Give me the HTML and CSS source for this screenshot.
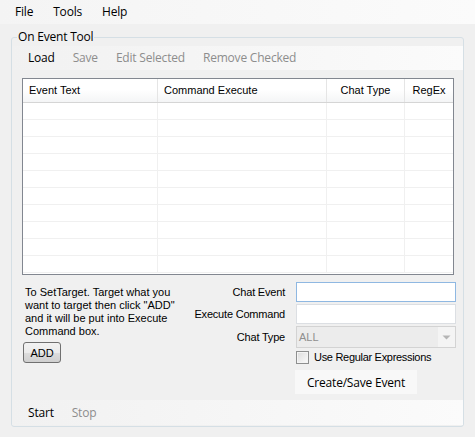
FILE: index.html
```html
<!DOCTYPE html>
<html>
<head>
<meta charset="utf-8">
<link rel="stylesheet" href="styles.css">
</head>
<body>
<div class="menubar">
  <span class="menu-item">File</span>
  <span class="menu-item">Tools</span>
  <span class="menu-item">Help</span>
</div>
<fieldset class="group">
  <legend class="group-title">On Event Tool</legend>
  <div class="toolstrip">
    <span class="tool-item">Load</span>
    <span class="tool-item disabled">Save</span>
    <span class="tool-item disabled">Edit Selected</span>
    <span class="tool-item disabled">Remove Checked</span>
  </div>
  <div class="listview">
    <div class="lv-header">
      <div class="lv-hcell">Event Text</div>
      <div class="lv-hcell">Command Execute</div>
      <div class="lv-hcell center">Chat Type</div>
      <div class="lv-hcell center last">RegEx</div>
    </div>
    <div class="lv-body">
      <div class="lv-row"><div></div><div></div><div></div><div></div></div>
      <div class="lv-row"><div></div><div></div><div></div><div></div></div>
      <div class="lv-row"><div></div><div></div><div></div><div></div></div>
      <div class="lv-row"><div></div><div></div><div></div><div></div></div>
      <div class="lv-row"><div></div><div></div><div></div><div></div></div>
      <div class="lv-row"><div></div><div></div><div></div><div></div></div>
      <div class="lv-row"><div></div><div></div><div></div><div></div></div>
      <div class="lv-row"><div></div><div></div><div></div><div></div></div>
      <div class="lv-row"><div></div><div></div><div></div><div></div></div>
      <div class="lv-row"><div></div><div></div><div></div><div></div></div>
    </div>
  </div>
  <div class="lower">
    <div class="help">
      <p class="help-text">To SetTarget. Target what you<br>want to target then click "ADD"<br>and it will be put into Execute<br>Command box.</p>
      <button class="btn-add">ADD</button>
    </div>
    <div class="form">
      <label class="lbl">Chat Event</label>
      <div class="textbox focused"></div>
      <label class="lbl">Execute Command</label>
      <div class="textbox"></div>
      <label class="lbl">Chat Type</label>
      <div class="combo">
        <span class="combo-text">ALL</span>
        <span class="combo-arrow">
          <svg width="9" height="5" viewBox="0 0 9 5"><path d="M0.5 0.5 L8.5 0.5 L4.5 4.5 Z" fill="#b5b5b5"/></svg>
        </span>
      </div>
      <div class="check-row">
        <span class="checkbox"></span>
        <span class="check-label">Use Regular Expressions</span>
      </div>
      <button class="btn-save">Create/Save Event</button>
    </div>
  </div>
  <div class="toolstrip bottom">
    <span class="tool-item">Start</span>
    <span class="tool-item disabled">Stop</span>
  </div>
</fieldset>
</body>
</html>
```

FILE: styles.css
```css
html, body {
  margin: 0;
  padding: 0;
}
body {
  width: 475px;
  height: 437px;
  overflow: hidden;
  background: #f0f0f0;
  font-family: "Open Sans", "Noto Sans", sans-serif;
  font-size: 12px;
  letter-spacing: -0.2px;
  color: #000;
}
.menubar {
  height: 24px;
  display: flex;
  align-items: center;
  padding-left: 5px;
  background: linear-gradient(to right, #f4f4f4, #fbfbfb);
}
.menu-item {
  padding: 0 10px;
  line-height: 24px;
}
.group {
  margin: 5px 0 0 11px;
  width: 453px;
  box-sizing: border-box;
  min-width: 0;
  padding: 1px 0 1px 0;
  border: 1px solid #d5dfe5;
  border-radius: 3px;
}
.group-title {
  margin-left: 5px;
  padding: 0 1px;
  line-height: 16px;
  font-size: 12px;
}
.toolstrip {
  height: 24px;
  display: flex;
  align-items: center;
  padding-left: 7px;
  background: linear-gradient(to right, #f1f1f1, #fbfbfb);
}
.tool-item {
  padding: 0 9px;
  line-height: 24px;
}
.tool-item.disabled {
  color: #8d8d8d;
}
.toolstrip.bottom {
  height: 25px;
}
.listview {
  margin: 8px 0 0 10px;
  width: 432px;
  height: 197px;
  box-sizing: border-box;
  border: 1px solid #828790;
  background: #fff;
  font-family: "Liberation Sans", Arial, sans-serif;
  font-size: 11px;
  letter-spacing: 0;
}
.lv-header {
  display: grid;
  grid-template-columns: 135px 169px 78px 48px;
  height: 23px;
  border-bottom: 1px solid #d5d5d5;
  background: linear-gradient(to bottom, #ffffff 0%, #ffffff 45%, #f4f5f6 100%);
}
.lv-hcell {
  line-height: 23px;
  padding-left: 6px;
  border-right: 1px solid #e5e5e5;
  white-space: nowrap;
  overflow: hidden;
}
.lv-hcell.center {
  padding-left: 0;
  text-align: center;
}
.lv-hcell.last {
  border-right: none;
}
.lv-body {
  display: flex;
  flex-direction: column;
}
.lv-row {
  display: grid;
  grid-template-columns: 135px 169px 78px 48px;
  height: 17px;
  box-sizing: border-box;
  border-bottom: 1px solid #f0f0f0;
}
.lv-row > div {
  border-right: 1px solid #f0f0f0;
}
.lv-row > div:last-child {
  border-right: none;
}
.lower {
  height: 125px;
  display: flex;
  font-family: "Liberation Sans", Arial, sans-serif;
  font-size: 11px;
  letter-spacing: 0;
}
.help {
  padding: 11px 0 0 13px;
  width: 170px;
}
.help-text {
  margin: 0;
  line-height: 13px;
}
.btn-add {
  margin: 4px 0 0 -2px;
  width: 38px;
  height: 21px;
  padding: 0;
  border: 1px solid #707070;
  border-radius: 3px;
  background: linear-gradient(to bottom, #f2f2f2 0%, #ebebeb 50%, #dddddd 51%, #cfcfcf 100%);
  font-family: "Liberation Sans", Arial, sans-serif;
  font-size: 11px;
  color: #000;
}
.form {
  margin-left: auto;
  padding: 7px 7px 0 0;
  display: grid;
  grid-template-columns: auto 160px;
  column-gap: 11px;
  row-gap: 2px;
  grid-template-rows: 20px 20px 22px 14px auto;
  align-items: center;
  align-content: start;
}
.lbl {
  text-align: right;
  white-space: nowrap;
  letter-spacing: -0.2px;
}
.textbox {
  height: 20px;
  box-sizing: border-box;
  border: 1px solid #dcdfe3;
  background: #fff;
}
.textbox.focused {
  border-color: #8fb8e2;
}
.combo {
  height: 22px;
  box-sizing: border-box;
  border: 1px solid #d3d3d3;
  background: #ececec;
  display: flex;
  align-items: center;
}
.combo-text {
  flex: 1;
  padding-left: 2px;
  color: #8f8f8f;
}
.combo-arrow {
  width: 17px;
  height: 20px;
  background: #f4f4f4;
  display: flex;
  align-items: center;
  justify-content: center;
}
.check-row {
  grid-column: 2;
  display: flex;
  align-items: center;
  height: 14px;
}
.checkbox {
  width: 13px;
  height: 13px;
  box-sizing: border-box;
  border: 1px solid #8e8f8f;
  background: linear-gradient(135deg, #dcdcdc, #fbfbfb);
  box-shadow: inset 0 0 0 1px #f4f4f4;
}
.check-label {
  margin-left: 5px;
  letter-spacing: -0.3px;
}
.btn-save {
  grid-column: 2;
  justify-self: start;
  margin: 4px 0 0 -1px;
  width: 122px;
  height: 24px;
  padding: 0;
  border: none;
  background: #f8f8f8;
  font-family: "Open Sans", "Noto Sans", sans-serif;
  font-size: 12px;
  letter-spacing: -0.2px;
  color: #000;
}
```
